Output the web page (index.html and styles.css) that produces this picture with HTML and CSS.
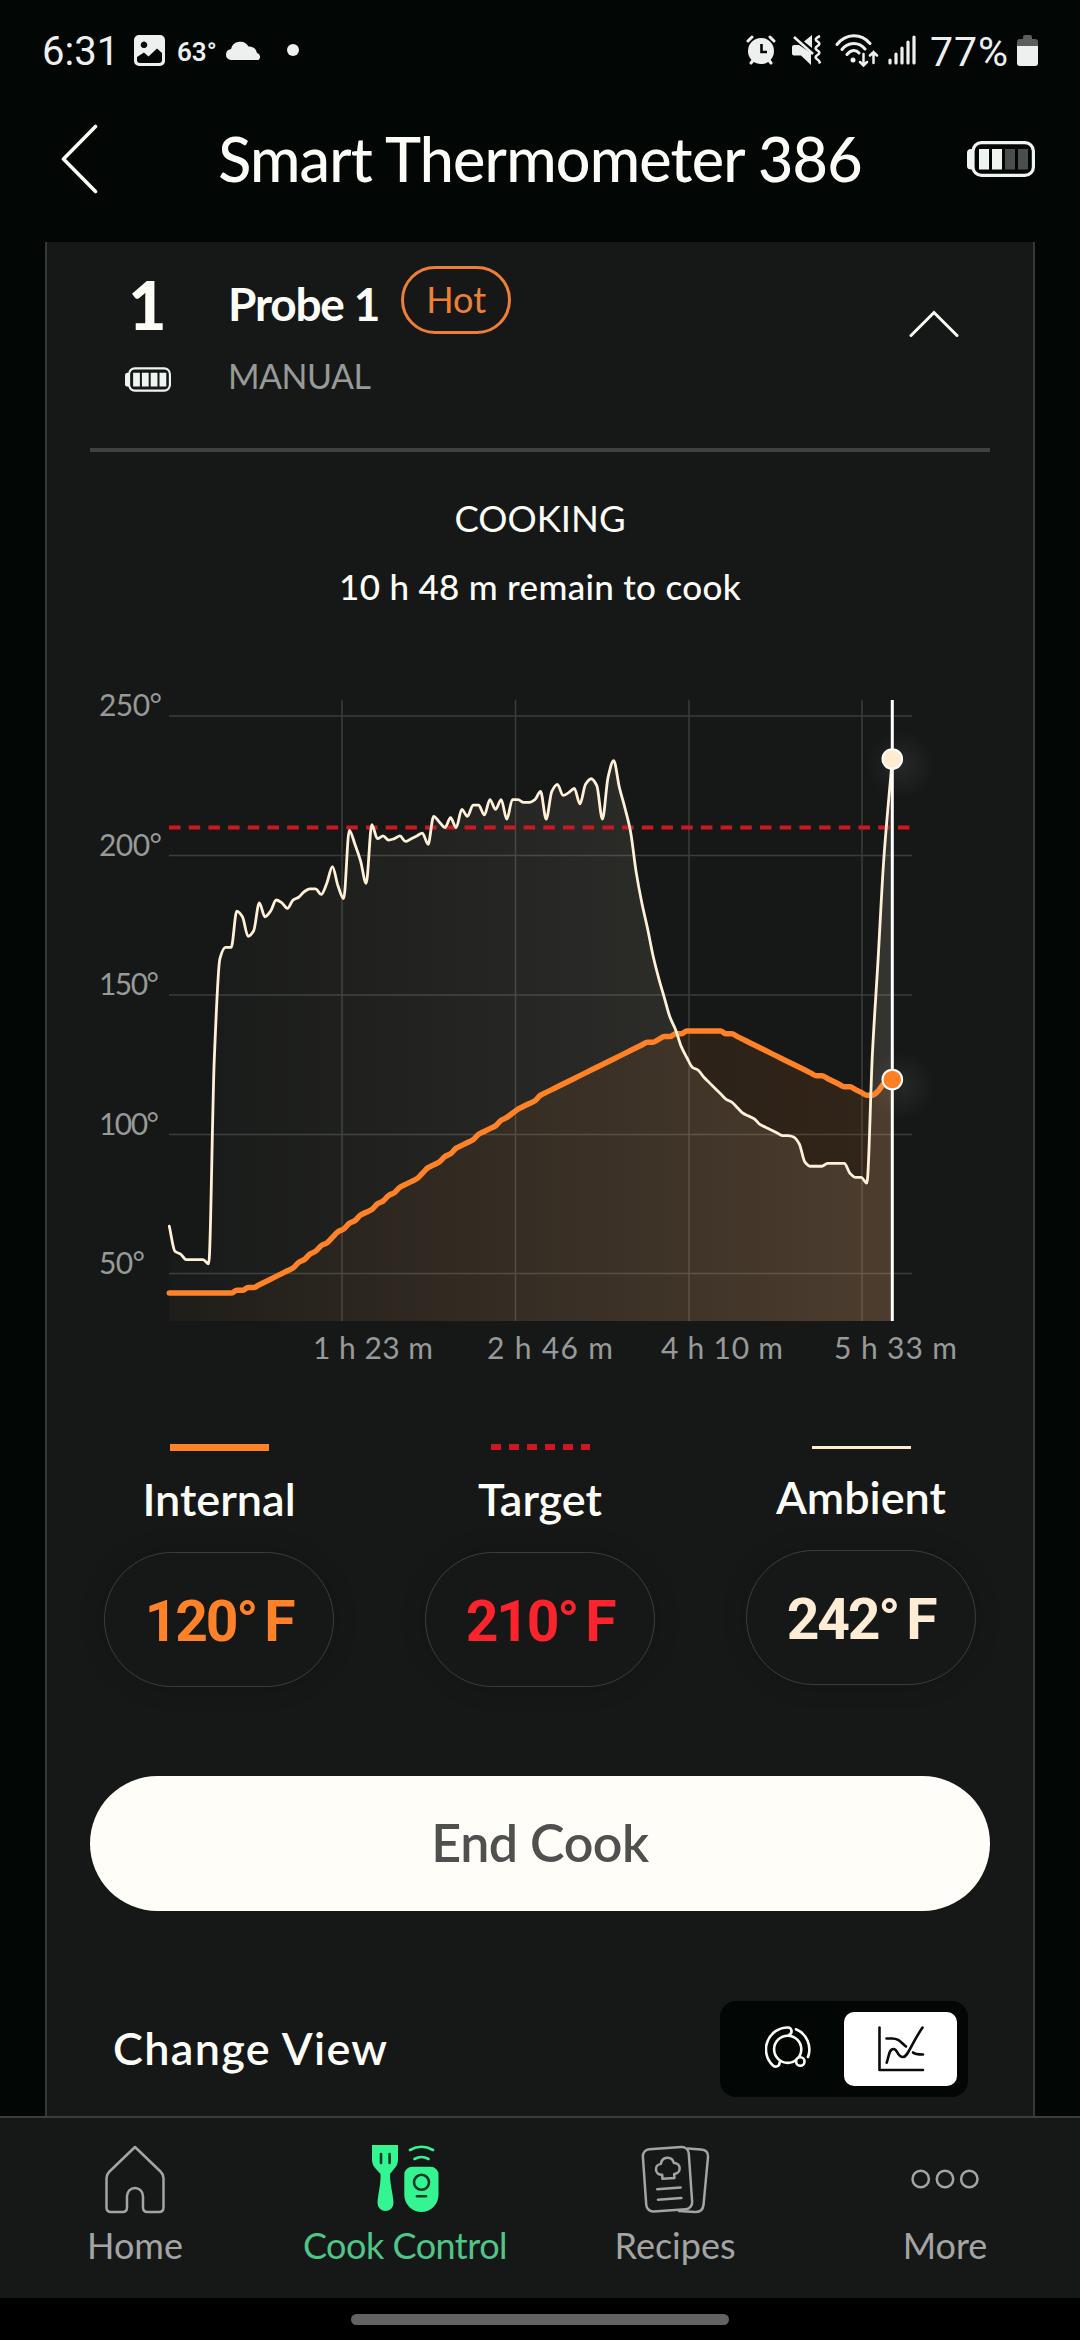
FILE: index.html
```
<!DOCTYPE html>
<html lang="en">
<head>
  <meta charset="UTF-8" />
  <meta name="viewport" content="width=device-width, initial-scale=1.0"/>
  <title>Smart Thermometer 386</title>
  <link rel="stylesheet" href="styles.css">
</head>
<body>

<!-- Phone status bar -->
<div class="status-bar">
  <div class="status-left">
    <span class="clock">6:31</span>
    <svg class="ico-photo" width="31" height="31" viewBox="0 0 31 31">
      <path fill="#eef0ef" fill-rule="evenodd" d="M5 0H26a5 5 0 0 1 5 5V26a5 5 0 0 1-5 5H5a5 5 0 0 1-5-5V5a5 5 0 0 1 5-5ZM10 6.500a3.300 3.300 0 1 0 .01 0ZM3 22V25a3 3 0 0 0 3 3H25a3 3 0 0 0 3-3V18L23 13.500 14.500 21.500 10 17.500Z"/>
    </svg>
    <span class="temp">63°</span>
    <svg class="ico-cloud" width="36" height="20" viewBox="0 0 36 20">
      <path fill="#eef0ef" d="M5 20a5 5 0 0 1-5-5 6 6 0 0 1 5-6A9.500 9.500 0 0 1 22.500 6.500 7.500 7.500 0 0 1 31 13a4 4 0 0 1 1.500 7Z"/>
    </svg>
    <span class="dot"></span>
  </div>
  <div class="status-right">
    <svg width="30" height="30" viewBox="0 0 30 30">
      <g stroke="#eef0ef" stroke-width="3" stroke-linecap="round"><path d="M2 6 6 2M28 6 24 2M5 28 8 24M25 28 22 24"/></g>
      <circle cx="15" cy="16" r="13" fill="#eef0ef"/>
      <path d="M15.500 9V17H21" fill="none" stroke="#020706" stroke-width="2.600"/>
    </svg>
    <svg class="ico-mute" width="31" height="30" viewBox="0 0 31 30">
      <path fill="#eef0ef" d="M0 12q0-2 2-2H7L19 18V30L9 20.500H2q-2 0-2-2ZM12 6.500 20 0V13Z"/>
      <path d="M2 2 21 19" stroke="#eef0ef" stroke-width="2.600"/>
      <path d="M28 1c-5 2-5 4-2.500 5.500s2.500 3 0 4.500-2.500 3 0 4.500 2.500 3 0 4.500-2.500 3 0 4.500 2 3 2.500 4" fill="none" stroke="#eef0ef" stroke-width="2.600"/>
    </svg>
    <svg class="ico-wifi" width="44" height="33" viewBox="0 0 44 33">
      <g fill="none" stroke="#eef0ef" stroke-width="3" stroke-linecap="round">
        <path d="M2 10.500C11-1 26-1 35 9.500M7 15.500C13 7.500 24 7.500 30 15M12 20.500C16 15.500 21 15.500 24 19"/>
        <path stroke-width="2.500" d="M28.500 20V31M25 28 28.500 31.500 32 28M38.500 29V18M35 21.500 38.500 18 42 21.500"/>
      </g>
      <circle cx="18" cy="26" r="2.500" fill="#eef0ef"/>
    </svg>
    <svg class="ico-signal" width="28" height="30" viewBox="0 0 28 30">
      <path d="M2 25V28M8 19V28M14 13V28M20 7V28M26 2V28" stroke="#eef0ef" stroke-width="3.200" stroke-linecap="round"/>
    </svg>
    <span class="battery-text">77%</span>
    <svg class="ico-level" width="21" height="31" viewBox="0 0 21 31">
      <path fill="#5b5e5d" d="M6 2a2 2 0 0 1 2-2H13a2 2 0 0 1 2 2V4H18a3 3 0 0 1 3 3V12H0V7A3 3 0 0 1 3 4H6Z"/>
      <path fill="#eef0ef" d="M0 11H21V28a3 3 0 0 1-3 3H3a3 3 0 0 1-3-3Z"/>
    </svg>
  </div>
</div>

<header>
  <svg class="back" width="38" height="70" viewBox="0 0 38 70">
    <path d="M34.500 2.500 2.500 35 34.500 67.500" fill="none" stroke="#fdfdf8" stroke-width="3.600" stroke-linecap="round" stroke-linejoin="round"/>
  </svg>
  <h1>Smart Thermometer 386</h1>
  <svg class="battery" width="68" height="36" viewBox="0 0 68 36">
    <path d="M6 8H4Q0 8 0 12V25Q0 28.500 4 28.500H6Z" fill="#eef5f1"/>
    <rect x="6" y="1.600" width="60.400" height="32.800" rx="8.500" fill="none" stroke="#eef5f1" stroke-width="3.200"/>
    <path d="M12 8h10v20.500H12ZM25 8h10v20.500H25Z" fill="#eef5f1"/>
    <path d="M38 8h10v20.500H38ZM51 8h10v20.500H51Z" fill="#4a4f4c"/>
  </svg>
</header>

<main class="card">
  <section class="probe">
    <div class="probe-id">
      <div class="probe-number">1</div>
      <svg width="46" height="25" viewBox="0 0 68 36">
        <path d="M6 8H4Q0 8 0 12V25Q0 28.500 4 28.500H6Z" fill="#eef5f1"/>
        <rect x="6" y="1.600" width="60.400" height="32.800" rx="8.500" fill="none" stroke="#eef5f1" stroke-width="3.200"/>
        <path d="M12 8h10v20.500H12ZM25 8h10v20.500H25ZM38 8h10v20.500H38ZM51 8h10v20.500H51Z" fill="#eef5f1"/>
      </svg>
    </div>
    <div class="probe-info">
      <div class="probe-title">
        <span class="probe-name">Probe 1</span>
        <span class="badge">Hot</span>
      </div>
      <div class="probe-mode">MANUAL</div>
    </div>
    <svg class="collapse" width="50" height="28" viewBox="0 0 50 28">
      <path d="M2 25.500 25 2.500 48 25.500" fill="none" stroke="#fdfdf8" stroke-width="3" stroke-linecap="round"/>
    </svg>
  </section>

  <section class="cook-state">
    <div class="state">COOKING</div>
    <div class="remaining">10 h 48 m remain to cook</div>
  </section>

  <svg class="chart" width="900" height="690" viewBox="90 685 900 690">
    <defs>
      <linearGradient id="ambientFill" gradientUnits="userSpaceOnUse" x1="169" y1="0" x2="892" y2="0">
        <stop offset="0" stop-color="#ffedd3" stop-opacity="0.010"/>
        <stop offset="1" stop-color="#ffedd3" stop-opacity="0.130"/>
      </linearGradient>
      <linearGradient id="internalFill" gradientUnits="userSpaceOnUse" x1="169" y1="0" x2="892" y2="0">
        <stop offset="0" stop-color="#ff8124" stop-opacity="0.030"/>
        <stop offset="1" stop-color="#ff8124" stop-opacity="0.120"/>
      </linearGradient>
      <radialGradient id="glow">
        <stop offset="0" stop-color="#ffffff" stop-opacity="0.070"/>
        <stop offset="1" stop-color="#ffffff" stop-opacity="0"/>
      </radialGradient>
    </defs>
    <path class="grid" d="M169 716H912M169 855.500H912M169 995H912M169 1134.500H912M169 1273.500H912M342 700V1321M515.500 700V1321M689 700V1321M862 700V1321"/>
    <path id="ambientArea" fill="url(#ambientFill)"/>
    <path id="internalArea" fill="url(#internalFill)"/>
    <path class="target-line" d="M169 827.500H912"/>
    <path id="internalLine" class="internal-line"/>
    <path id="ambientLine" class="ambient-line"/>
    <circle cx="901" cy="765" r="34" fill="url(#glow)"/>
    <circle cx="901" cy="1086" r="34" fill="url(#glow)"/>
    <path class="cursor" d="M892.300 700V1321"/>
    <circle class="marker ambient-marker" cx="892.300" cy="759" r="9.800"/>
    <circle class="marker internal-marker" cx="892.300" cy="1079.500" r="9.800"/>
    <g class="axis">
      <text x="99" y="716" textLength="63">250°</text>
      <text x="99" y="856" textLength="63">200°</text>
      <text x="99" y="995" textLength="60">150°</text>
      <text x="99" y="1135" textLength="60">100°</text>
      <text x="99" y="1274" textLength="46">50°</text>
      <text x="313" y="1359" textLength="120">1 h 23 m</text>
      <text x="487" y="1359" textLength="126">2 h 46 m</text>
      <text x="661" y="1359" textLength="122">4 h 10 m</text>
      <text x="834" y="1359" textLength="123">5 h 33 m</text>
    </g>
  </svg>

  <section class="readings">
    <div class="reading">
      <span class="key key-internal"></span>
      <span class="label">Internal</span>
      <span class="value internal">120° F</span>
    </div>
    <div class="reading">
      <span class="key key-target"></span>
      <span class="label">Target</span>
      <span class="value target">210° F</span>
    </div>
    <div class="reading">
      <span class="key key-ambient"></span>
      <span class="label">Ambient</span>
      <span class="value ambient">242° F</span>
    </div>
  </section>

  <button class="end-cook">End Cook</button>

  <section class="change-view">
    <span class="change-label">Change View</span>
    <div class="toggle">
      <div class="option">
        <svg width="46" height="46" viewBox="0 0 46 46">
          <g fill="none" stroke="#fdfdf8" stroke-width="2.600" stroke-linecap="round">
            <circle cx="22.700" cy="23.300" r="13.600"/>
            <path d="M24 8.700A3.700 3.700 0 0 0 23 1.500 21.900 21.900 0 0 0 7.700 39.200 3.900 3.900 0 0 0 14.600 36.500"/>
            <path d="M31 3.300A21.900 21.900 0 0 1 43 31"/>
            <circle cx="35.300" cy="35.500" r="4.200" fill="#020706"/>
          </g>
        </svg>
      </div>
      <div class="option active">
        <svg width="48" height="46" viewBox="0 0 48 46">
          <g fill="none" stroke="#0a0c0b" stroke-width="2.600" stroke-linecap="round" stroke-linejoin="round">
            <path d="M2.500 1.500V44H46"/>
            <path d="M9.700 36.700C12 30 12 23 16.500 23S20 31 26 31C31 31 33 20 45.500 1.500"/>
            <path d="M9.500 12.500H15C22 12.500 23.500 16 29 20.500M36 26.500Q38 28.500 46 28.500"/>
          </g>
        </svg>
      </div>
    </div>
  </section>
</main>

<nav>
  <div class="tab">
    <svg width="60" height="69" viewBox="0 0 60 69">
      <path d="M30 2 4.500 26.500Q1.500 29.500 1.500 33V62.500Q1.500 67 6 67H17.500Q22 67 22 62.500V51a8 8 0 0 1 16 0V62.500Q38 67 42.500 67H54Q58.500 67 58.500 62.500V33Q58.500 29.500 55.500 26.500Z" fill="none" stroke="#a3a4a3" stroke-width="2.500" stroke-linejoin="round"/>
    </svg>
    <span>Home</span>
  </div>
  <div class="tab selected">
    <svg width="68" height="69" viewBox="0 0 68 69">
      <path fill="#35f492" d="M1 0H27V15Q27 20 23 24L19 29C19 40 22 48 22.500 58a8 8 0 0 1-16 0C7 48 10 40 9.500 29L5 24Q1 20 1 15Z"/>
      <path d="M10 9V18M18.600 9V18" stroke="#0c3a24" stroke-width="2.600" stroke-linecap="round"/>
      <path d="M39 5Q50.500-1.500 62 5M43.500 14Q50.500 10 57.500 14" fill="none" stroke="#35f492" stroke-width="2.600" stroke-linecap="round"/>
      <path fill="#35f492" d="M33.300 29.700a8 8 0 0 1 8-8H59.500a8 8 0 0 1 8 8V50a17.100 17.100 0 0 1-34.200 0Z"/>
      <g fill="none" stroke="#0c3a24" stroke-width="2.600" stroke-linecap="round"><circle cx="50.500" cy="37.300" r="7.500"/><path d="M46 51.300H55"/></g>
    </svg>
    <span>Cook Control</span>
  </div>
  <div class="tab">
    <svg width="69" height="69" viewBox="0 0 69 69">
      <g fill="none" stroke="#a3a4a3" stroke-width="2.500" stroke-linecap="round" stroke-linejoin="round">
        <path d="M47 3.500 60 4.500Q67.500 5 67 12L62.500 60Q61.500 67.500 54 67L38 66"/>
        <g transform="rotate(-4 26 34)">
          <rect x="3.500" y="3" width="46" height="62.500" rx="7"/>
          <path d="M21.500 33.500V29.500C14 29.500 13.500 19 21 18.500 22.500 11 32.500 11 34 18.500 41.500 19 41 29.500 33.500 29.500V33.500Z"/>
          <path d="M15.500 43.500H39M15.500 54H39"/>
        </g>
      </g>
    </svg>
    <span>Recipes</span>
  </div>
  <div class="tab">
    <svg width="68" height="69" viewBox="0 0 68 69">
      <g fill="none" stroke="#a3a4a3" stroke-width="2.500"><circle cx="9.700" cy="34" r="8.200"/><circle cx="34" cy="34" r="8.200"/><circle cx="58.300" cy="34" r="8.200"/></g>
    </svg>
    <span>More</span>
  </div>
</nav>

<div class="gesture-bar"><span></span></div>

<script>
  // one reading per step, in degrees F
  const ambient = [67,58,57,55,55,55,55,53.5,127,163,167,167,180,178,171,173,183,178,180,184,
    183,181,184,185,187,188,188,186,190,196,189,184.5,209,204,198,190,211,206,207,205.5,
    206,207,205,206,207,208,204,214,212,210,213.5,210,216.5,214,218,218,214.5,220,216.5,220,
    213,220,220,219,219,220,223,213,223,225.5,221.5,222.5,224,218.5,225.5,227.5,225,213,228,234,
    224.5,217,208.5,194,183,174,164,156,149,142,137.5,131.5,127.5,124,123,120.5,118.5,116.5,114.5,112.5,
    111.5,109.5,107.5,106.5,105.5,103.5,102.5,101.5,100.5,99.5,99.5,99,96.5,90,88.5,88.5,88.5,89.5,89.5,89.5,
    89.5,86,84.5,84.5,82.5,129,162.5,198,234.6];
  const internal = [43,43,43,43,43,43,43,43,43,43,43,43,44,44,45,45,46,47,48,49,
    50,51,52,54,55,57,58,60,61,63,65,66,68,69,71,72,73,75,76,78,
    79,81,82,83,84,86,88,89,90,92,93,95,96,97,98,100,101,102,103,105,
    106,107.5,109,110,111,112,114,115,116,117,118,119,120,121,122,123,124,125,126,127,
    128,129,130,131,132,133,133,134,135,135,136,136,137,137,137,137,137,137,137,136,
    136,135,134,133,132,131,130,129,128,127,126,125,124,123,122,121,121,120,119,118,
    117,117,116,115,114,114,115.5,118,119.7];

  const left = 169.3, right = 892.3, bottom = 1321, step = 5.625;

  function toPoints(data) {
    return data.map((t, i) => [
      i === data.length - 1 ? right : left + i * step,
      716 + (250 - t) * 2.788
    ]);
  }

  // monotone curve, flat at each local peak and dip
  function curve(pts) {
    const n = pts.length;
    const d = [];
    for (let i = 0; i < n - 1; i++) {
      d.push((pts[i + 1][1] - pts[i][1]) / (pts[i + 1][0] - pts[i][0]));
    }
    const m = pts.map((p, i) => {
      if (i === 0) return d[0];
      if (i === n - 1) return d[n - 2];
      if (d[i - 1] * d[i] <= 0) return 0;
      return 2 * d[i - 1] * d[i] / (d[i - 1] + d[i]);
    });
    let path = `M${pts[0][0]} ${pts[0][1]}`;
    for (let i = 0; i < n - 1; i++) {
      const [x0, y0] = pts[i];
      const [x1, y1] = pts[i + 1];
      const h = (x1 - x0) / 3;
      path += `C${x0 + h} ${y0 + m[i] * h} ${x1 - h} ${y1 - m[i + 1] * h} ${x1} ${y1}`;
    }
    return path;
  }

  function draw(name, data) {
    const line = curve(toPoints(data));
    document.getElementById(name + 'Line').setAttribute('d', line);
    document.getElementById(name + 'Area').setAttribute('d', `${line}V${bottom}H${left}Z`);
  }

  draw('ambient', ambient);
  draw('internal', internal);
</script>

</body>
</html>
```
FILE: styles.css
```
* {
  box-sizing: border-box;
}

body {
  margin: 0;
  width: 1080px;
  height: 2340px;
  overflow: hidden;
  display: flex;
  flex-direction: column;
  font-family: Lato, 'Open Sans', sans-serif;
  background-color: #020706;
  color: #fdfdf8;
}

svg {
  display: block;
  flex-shrink: 0;
}

/* status bar */
.status-bar {
  height: 100px;
  display: flex;
  justify-content: space-between;
  align-items: center;
  padding: 0 42px;
  font-family: Roboto, sans-serif;
  color: #eef0ef;
}

.status-left,
.status-right {
  display: flex;
  align-items: center;
}

.clock {
  font-size: 40px;
  width: 92px;
  padding-top: 2px;
}

.temp {
  font-size: 26px;
  font-weight: 600;
  margin-left: 12px;
  width: 49px;
  padding-top: 4px;
}

.dot {
  width: 12px;
  height: 12px;
  border-radius: 50%;
  background-color: #eef0ef;
  margin-left: 25px;
}

.ico-mute {
  margin-left: 16px;
}

.ico-wifi {
  margin-left: 12px;
}

.ico-signal {
  margin-left: 9px;
}

.battery-text {
  font-size: 41px;
  margin-left: 14px;
  width: 87px;
  letter-spacing: 1px;
  padding-top: 3px;
  white-space: nowrap;
}

/* page title */
header {
  height: 142px;
  display: flex;
  justify-content: space-between;
  align-items: center;
  padding: 0 45px 24px 61px;
}

.back {
  margin-right: 14px;
}

h1 {
  margin: 0;
  font-size: 61px;
  font-weight: 500;
  line-height: 80px;
  letter-spacing: -0.8px;
}

/* card */
.card {
  flex: 1;
  width: 990px;
  margin: 0 auto;
  padding: 0 43px;
  background-color: #161817;
  border: 2px solid #353837;
  border-top: none;
  border-bottom: none;
}

.probe {
  height: 210px;
  display: flex;
  align-items: flex-start;
  border-bottom: 4px solid #404241;
}

.probe-id {
  width: 115px;
  display: flex;
  flex-direction: column;
  align-items: center;
}

.probe-number {
  height: 125px;
  line-height: 125px;
  font-size: 66px;
  font-weight: 900;
}

.probe-info {
  flex: 1;
  padding: 24px 0 0 23px;
}

.probe-title {
  display: flex;
  align-items: center;
  gap: 22px;
  height: 68px;
}

.probe-name {
  font-size: 46px;
  font-weight: 700;
  letter-spacing: -1.2px;
  padding-top: 6px;
}

.badge {
  width: 110px;
  height: 68px;
  line-height: 60px;
  border: 3px solid #ee7f37;
  border-radius: 34px;
  color: #ee7f37;
  font-size: 36px;
  text-align: center;
}

.probe-mode {
  margin-top: 22px;
  font-size: 34px;
  line-height: 40px;
  letter-spacing: -0.5px;
  color: #989a99;
}

.collapse {
  margin: 68px 31px 0 0;
}

.cook-state {
  padding-top: 42px;
  text-align: center;
}

.state {
  font-size: 36.5px;
  line-height: 48px;
}

.remaining {
  margin-top: 20px;
  font-size: 35px;
  line-height: 48px;
  font-weight: 500;
  letter-spacing: 0.3px;
}

/* chart */
.chart {
  margin-top: 75px;
}

.grid {
  fill: none;
  stroke: #3a3d3c;
  stroke-width: 1.5;
}

.target-line {
  stroke: #cb1922;
  stroke-width: 4;
  stroke-dasharray: 11.5 8.2;
}

.internal-line {
  fill: none;
  stroke: #ff8128;
  stroke-width: 5.5;
  stroke-linejoin: round;
  stroke-linecap: round;
}

.ambient-line {
  fill: none;
  stroke: #fff0d8;
  stroke-width: 2.8;
  stroke-linejoin: round;
  stroke-linecap: round;
}

.cursor {
  stroke: #ffffff;
  stroke-width: 3;
}

.marker {
  stroke: #ffffff;
  stroke-width: 2;
}

.ambient-marker {
  fill: #ffecd0;
}

.internal-marker {
  fill: #ff7f24;
}

.axis {
  font-size: 30px;
  fill: #989a99;
}

/* readings */
.readings {
  display: grid;
  grid-template-columns: repeat(3, 321px);
  justify-content: center;
  margin-top: 69px;
}

.reading {
  display: flex;
  flex-direction: column;
  align-items: center;
}

.key {
  width: 99px;
  height: 7px;
}

.key-internal {
  background-color: #ff8128;
}

.key-target {
  background: repeating-linear-gradient(to right, #cb1922 0 9.6px, transparent 9.6px 18px);
  height: 6px;
  margin-bottom: 1px;
}

.key-ambient {
  background-color: #ffecd0;
  height: 3px;
  margin: 2px 0 0;
}

.label {
  font-size: 45px;
  font-weight: 600;
  line-height: 54px;
  margin-top: 21px;
}

.value {
  width: 230px;
  height: 135px;
  margin-top: 26px;
  border: 1.5px solid #3a3d3c;
  border-radius: 68px;
  box-shadow: 0 0 26px rgba(0, 0, 0, 0.16);
  font-family: Roboto, sans-serif;
  font-size: 57px;
  font-weight: 700;
  line-height: 138px;
  text-align: center;
  letter-spacing: -2.2px;
  word-spacing: -4px;
}

.internal {
  color: #ff8128;
}

.target {
  color: #fb232c;
}

.ambient {
  color: #ffecd4;
}

.end-cook {
  display: block;
  width: 900px;
  height: 135px;
  margin-top: 89px;
  padding: 0 0 3px;
  border: none;
  border-radius: 68px;
  background-color: #fefdf8;
  color: #50504e;
  font-family: inherit;
  font-size: 52px;
  font-weight: 600;
  letter-spacing: -0.5px;
}

.change-view {
  display: flex;
  justify-content: space-between;
  align-items: center;
  margin-top: 90px;
  padding: 0 22px 0 23px;
}

.change-label {
  font-size: 45px;
  font-weight: 600;
  letter-spacing: 1.3px;
  padding-bottom: 3px;
}

.toggle {
  width: 248px;
  height: 96px;
  display: flex;
  padding: 11px;
  border-radius: 16px;
  background-color: #020706;
}

.option {
  flex: 1;
  display: flex;
  justify-content: center;
  align-items: center;
  border-radius: 10px;
}

.option.active {
  background-color: #ffffff;
}

/* bottom tabs */
nav {
  height: 182px;
  display: grid;
  grid-template-columns: repeat(4, 270px);
  background-color: #161817;
  border-top: 2px solid #3a3d3c;
}

.tab {
  display: flex;
  flex-direction: column;
  align-items: center;
  padding-top: 27px;
  font-size: 36px;
  line-height: 44px;
  color: #a3a4a3;
}

.tab span {
  margin-top: 9px;
}

.tab.selected {
  color: #4fc587;
  letter-spacing: -0.5px;
}

.gesture-bar {
  height: 42px;
  display: flex;
  justify-content: center;
  background-color: #000000;
}

.gesture-bar span {
  width: 378px;
  height: 11px;
  margin-top: 16px;
  border-radius: 6px;
  background-color: #636363;
}
```
